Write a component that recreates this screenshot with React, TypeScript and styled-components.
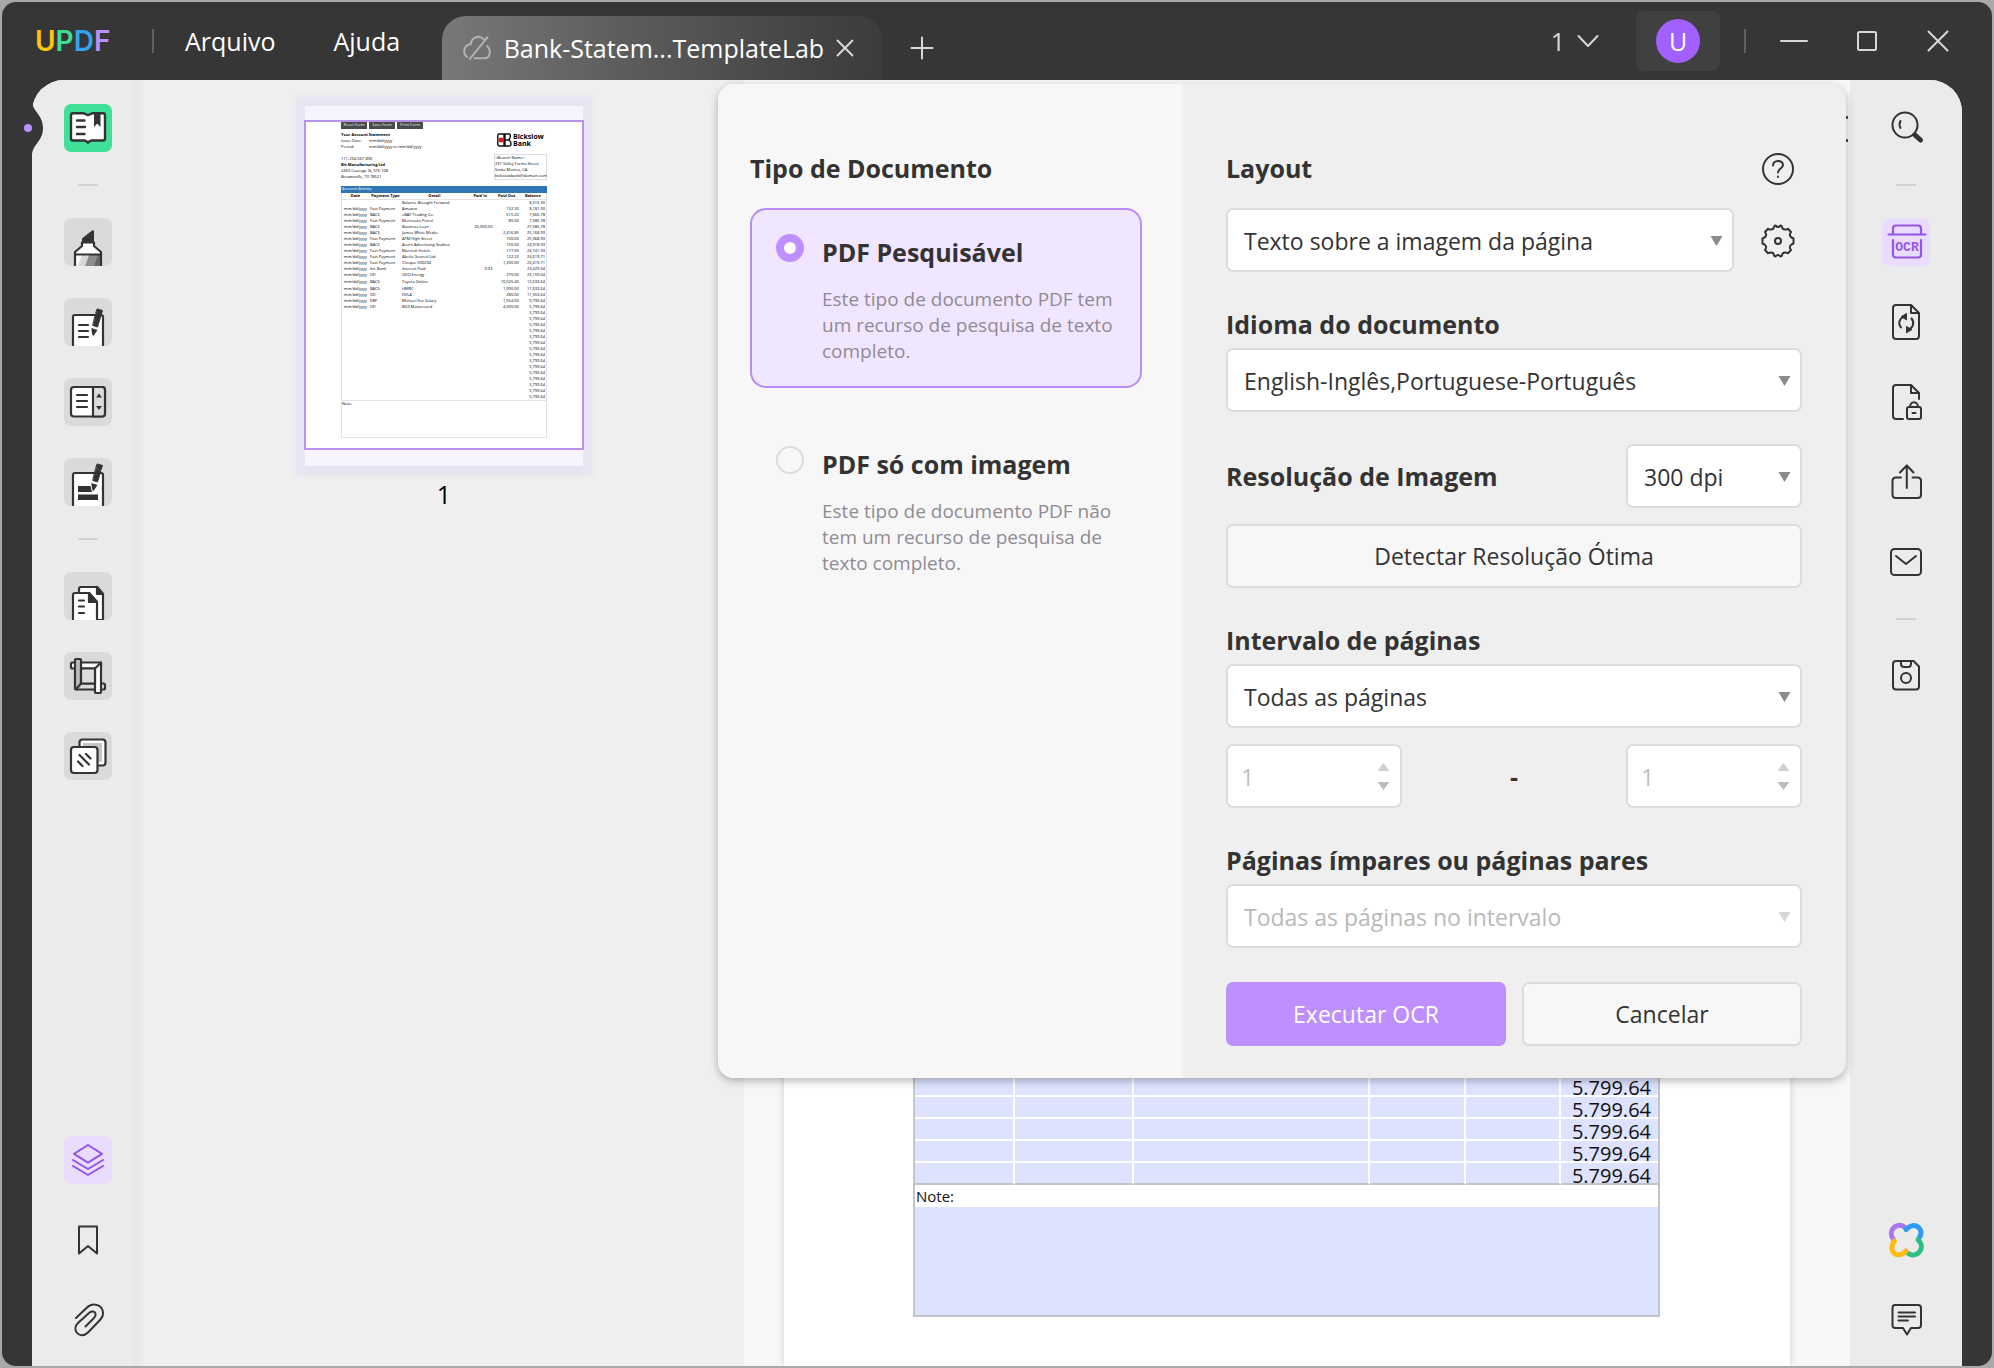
import React from "react";
import styled, { createGlobalStyle, css } from "styled-components";

const ink = "#333333";
const accent = "#bd8fff";

const GlobalStyle = createGlobalStyle`
  *, *::before, *::after { box-sizing: border-box; }
  body {
    margin: 0;
    background: #a9a9ab;
    color: ${ink};
    font-family: "Open Sans", "Noto Sans", sans-serif;
    font-size: 23px;
  }
  button, input, select { font: inherit; color: inherit; }
  button { border: 0; padding: 0; background: none; cursor: pointer; }
  svg { display: block; }
`;

/* ---------- window ---------- */

const Screen = styled.div`
  height: 100vh;
  padding: 2px;
  overflow: hidden;
`;

const Window = styled.div`
  height: 100%;
  display: flex;
  flex-direction: column;
  background: #363636;
  border-radius: 14px;
  overflow: hidden;
`;

const TitleBar = styled.header`
  height: 78px;
  flex: none;
  display: flex;
  align-items: stretch;
  color: #ffffff;
  padding: 0 41px 0 33px;
`;

const Logo = styled.div`
  display: flex;
  align-items: center;
  width: 76px;
  font-family: Inter, sans-serif;
  font-weight: 600;
  font-size: 28px;
  line-height: 32px;
`;

const LogoLetter = styled.span<{ $color: string }>`
  color: ${(p) => p.$color};
`;

const BarDivider = styled.span`
  align-self: center;
  width: 2px;
  height: 24px;
  background: #626262;
`;

const Menu = styled.nav`
  display: flex;
  align-items: center;
  gap: 58px;
  margin: 0 42px 0 31px;
`;

const MenuButton = styled.button`
  font-size: 25px;
  line-height: 36px;
`;

const Tab = styled.div`
  margin-top: 14px;
  width: 440px;
  display: flex;
  align-items: center;
  gap: 12px;
  padding: 0 28px 0 20px;
  border-radius: 24px 24px 0 0;
  background: linear-gradient(90deg, #787878 0%, #5a5a5a 45%, #404040 90%, #3c3c3c 100%);
`;

const TabTitle = styled.span`
  flex: 1;
  font-size: 25px;
  line-height: 36px;
  white-space: nowrap;
`;

const NewTab = styled.button`
  align-self: flex-end;
  height: 64px;
  margin-left: 28px;
`;

const WindowTools = styled.div`
  margin-left: auto;
  display: flex;
  align-items: center;
`;

const TabCount = styled.button`
  display: flex;
  align-items: center;
  gap: 12px;
  color: #d8d8d8;
  margin-right: 37px;
  font-size: 25px;
  line-height: 36px;
`;

const Account = styled.button`
  width: 84px;
  height: 60px;
  display: grid;
  place-items: center;
  background: #404040;
  border-radius: 8px;
  margin-right: 24px;
`;

const Avatar = styled.span`
  width: 44px;
  height: 44px;
  border-radius: 50%;
  background: #a160ff;
  color: #ffffff;
  font-size: 25px;
  line-height: 44px;
  text-align: center;
`;

const Caption = styled.div`
  display: flex;
  align-items: center;
  gap: 47px;
  margin-left: 33px;
`;

/* ---------- workspace ---------- */

const Body = styled.div`
  position: relative;
  flex: 1;
  min-height: 0;
  margin: 0 30px;
  display: flex;
  background: #efefef;
  border-radius: 32px 32px 0 0;
`;

const Notch = styled.button`
  position: absolute;
  left: -10px;
  top: 20px;
`;

const Rail = styled.aside<{ $side: "left" | "right" }>`
  flex: none;
  width: 112px;
  padding: 24px 0 22px;
  display: flex;
  flex-direction: column;
  align-items: center;
  justify-content: space-between;
  background: #ebebeb;
  ${(p) =>
    p.$side === "left"
      ? css`
          border-radius: 32px 0 0 0;
          background: linear-gradient(90deg, #ebebeb 88%, #e8e8e8 92%, #ededed 100%);
        `
      : css`
          border-radius: 0 32px 0 0;
        `}
`;

const RailGroup = styled.div`
  display: flex;
  flex-direction: column;
  align-items: center;
  gap: 32px;
`;

const RailButton = styled.button<{ $bg?: string }>`
  width: 48px;
  height: 48px;
  display: grid;
  place-items: center;
  border-radius: 7px;
  background: ${(p) => p.$bg || "transparent"};
`;

const RailDivider = styled.span`
  width: 20px;
  height: 2px;
  background: #d2d2d2;
`;

const Thumbs = styled.section`
  flex: none;
  width: 600px;
  padding-top: 26px;
  display: flex;
  flex-direction: column;
  align-items: center;
`;

const ThumbFrame = styled.div`
  width: 278px;
  padding: 14px 0 16px;
  background: #f8f4fe;
  box-shadow: 0 0 4px 10px #e8e4f2;
`;

const ThumbPage = styled.article`
  height: 330px;
  margin: 0 -1px;
  padding: 0 35px;
  border: 2px solid #b993ea;
  background: #ffffff;
  font-size: 4px;
  line-height: 6px;
  color: #000000;
`;

const PageNumber = styled.span`
  margin-top: 10px;
  color: #000000;
  font-size: 25px;
  line-height: 36px;
`;

const FormButtons = styled.div`
  display: flex;
  gap: 2px;
  margin-bottom: 3px;
`;

const FormButton = styled.span`
  width: 26px;
  height: 7px;
  background: #4a4a4a;
  color: #eeeeee;
  text-align: center;
`;

const StatementHead = styled.div`
  display: flex;
  justify-content: space-between;
  margin-bottom: 6px;
`;

const HeadColumn = styled.div<{ $right?: boolean }>`
  display: flex;
  flex-direction: column;
  ${(p) => p.$right && "width: 53px; justify-content: space-between;"}
`;

const HeadLine = styled.span<{ $gap?: boolean; $bold?: boolean }>`
  white-space: nowrap;
  ${(p) => p.$bold && "font-weight: 700;"}
  ${(p) => p.$gap && "margin-top: 6px;"}
`;

const Fact = styled.span`
  display: grid;
  grid-template-columns: 28px auto;
  white-space: nowrap;
`;

const BankLogo = styled.div`
  display: flex;
  gap: 1px;
  padding: 1px 0 0 3px;
  font-size: 7px;
  line-height: 7px;
  font-weight: 700;
`;

const Branch = styled.div`
  display: flex;
  flex-direction: column;
  border: 1px solid #dddddd;
  height: 26px;
  white-space: nowrap;
`;

const ActivityBar = styled.div`
  background: #2f74b5;
  color: #ffffff;
  height: 7px;
  padding-left: 1px;
`;

const Ledger = styled.table`
  width: 100%;
  table-layout: fixed;
  border-collapse: collapse;
  border: 1px solid #e2e2e2;
  border-top: 0;

  th, td { padding: 0; height: 6px; line-height: 6px; white-space: nowrap; }
  thead th { border-bottom: 1px solid #e2e2e2; }
  td:nth-child(1) { text-align: center; }
  td:nth-child(2) { padding-left: 1px; }
  td:nth-child(n + 4) { text-align: right; padding-right: 1px; }
`;

const LedgerRow = styled.tr<{ $tall?: boolean }>`
  ${(p) => p.$tall && "td { height: 8px; line-height: 8px; }"}
`;

const ThumbNote = styled.div`
  height: 37px;
  border: 1px solid #e2e2e2;
  border-top: 0;
`;

const Viewer = styled.main`
  flex: 1;
  min-width: 0;
  min-height: 0;
  display: flex;
  flex-direction: column;
  background: #f7f7f7;
  overflow: hidden;
`;

const ViewerTools = styled.div`
  height: 76px;
  flex: none;
  display: flex;
  justify-content: flex-end;
  padding: 36px 2px 0 0;
`;

const Paper = styled.article`
  flex: 1;
  display: flex;
  flex-direction: column;
  justify-content: flex-end;
  margin: 0 60px 0 40px;
  padding: 0 130px 49px 129px;
  background: #ffffff;
  box-shadow: 0 0 8px rgba(0, 0, 0, 0.16);
`;

const FormTable = styled.table`
  width: 100%;
  table-layout: fixed;
  border-collapse: separate;
  border-spacing: 0;
  border: solid #c2c4cc;
  border-width: 0 2px;

  td {
    height: 22px;
    padding: 0;
    background: #dde3ff;
    border-bottom: 2px solid #ffffff;
    border-right: 2px solid #ffffff;
  }
  td:last-child { border-right: 0; }
  tr:last-child td { border-bottom-color: #c2c4cc; }
`;

const Amount = styled.div`
  height: 20px;
  padding-right: 7px;
  text-align: right;
  font-size: 20px;
  line-height: 26px;
  color: #111111;
`;

const NoteBox = styled.div`
  border: 2px solid #c2c4cc;
  border-top: 0;
`;

const NoteLabel = styled.label`
  display: block;
  height: 22px;
  padding-left: 1px;
  font-size: 15px;
  line-height: 22px;
  color: #111111;
`;

const NoteField = styled.textarea`
  display: block;
  width: 100%;
  height: 108px;
  border: 0;
  background: #dde3ff;
  resize: none;
`;

/* ---------- OCR dialog ---------- */

const Dialog = styled.form`
  position: absolute;
  top: 4px;
  right: 116px;
  width: 1128px;
  display: flex;
  border-radius: 16px;
  background: #efefef;
  box-shadow: 0 3px 8px rgba(0, 0, 0, 0.28);
  overflow: hidden;
`;

const TypePane = styled.fieldset`
  width: 464px;
  margin: 0;
  border: 0;
  padding: 68px 40px 32px 32px;
  background: #f7f7f7;
`;

const PaneTitle = styled.legend`
  float: left;
  width: 100%;
  padding: 0;
  margin-bottom: 24px;
  font-weight: 700;
  font-size: 25px;
  line-height: 32px;
`;

const Choice = styled.label<{ $on?: boolean }>`
  clear: both;
  display: grid;
  grid-template-columns: 28px 1fr;
  gap: 0 18px;
  height: 180px;
  margin-bottom: 32px;
  padding: 24px 16px 0 24px;
  border: 2px solid ${(p) => (p.$on ? "#b98cf5" : "transparent")};
  border-radius: 16px;
  background: ${(p) => (p.$on ? "#f1e6ff" : "transparent")};
`;

const Radio = styled.input`
  appearance: none;
  width: 28px;
  height: 28px;
  margin: 0;
  border: 2px solid #dcdcdc;
  border-radius: 50%;

  &:checked {
    border: 8px solid ${accent};
    background: #ffffff;
  }
`;

const ChoiceText = styled.span`
  display: flex;
  flex-direction: column;
  gap: 18px;
  padding-top: 2px;
`;

const ChoiceName = styled.strong`
  font-size: 25px;
  line-height: 32px;
`;

const ChoiceNote = styled.span`
  font-size: 19px;
  line-height: 26px;
  color: #8f8b94;
`;

const OptionsPane = styled.div`
  flex: 1;
  padding: 68px 44px 32px;
`;

const Row = styled.div<{ $gap?: number; $top?: number }>`
  display: flex;
  align-items: center;
  justify-content: space-between;
  gap: ${(p) => p.$gap || 0}px;
  margin-top: ${(p) => p.$top || 0}px;
`;

const FieldLabel = styled.label<{ $block?: boolean }>`
  font-weight: 700;
  font-size: 25px;
  line-height: 32px;
  ${(p) => p.$block && "display: block; margin: 36px 0 8px;"}
`;

const control = css`
  height: 64px;
  border: 2px solid #dcdcdc;
  border-radius: 7px;
  background: #ffffff;
`;

const SelectBox = styled.div<{ $width?: string }>`
  display: grid;
  align-items: center;
  width: ${(p) => p.$width || "100%"};

  > * { grid-area: 1 / 1; }
  > svg { justify-self: end; margin: 2px 11px 0 0; pointer-events: none; }
`;

const Select = styled.select`
  ${control}
  appearance: none;
  width: 100%;
  padding: 2px 32px 0 16px;
  &:disabled { color: #b9b9b9; opacity: 1; }
`;

const NumberBox = styled.div`
  ${control}
  width: 176px;
  display: flex;
  align-items: center;
  padding: 0 10px 0 13px;
`;

const NumberInput = styled.input`
  flex: 1;
  min-width: 0;
  border: 0;
  padding: 2px 0 0;
  background: none;
  color: #bdbdbd;
  appearance: textfield;
  &::-webkit-inner-spin-button { display: none; }
`;

const PushButton = styled.button<{ $primary?: boolean }>`
  ${control}
  flex: 1;
  background: #f7f7f7;
  ${(p) => p.$primary && `background: ${accent}; border-color: ${accent}; color: #ffffff;`}
`;

/* ---------- icons ---------- */

type IconProps = { children: React.ReactNode; size?: number; stroke?: string; width?: number };

const Icon = ({ children, size = 48, stroke = ink, width = 2 }: IconProps) => (
  <svg
    width={size}
    height={size}
    viewBox={`0 0 ${size} ${size}`}
    fill="none"
    stroke={stroke}
    strokeWidth={width}
    strokeLinecap="round"
    strokeLinejoin="round"
    aria-hidden="true"
  >
    {children}
  </svg>
);

const Pen = ({ y }: { y: number }) => (
  <g transform={`translate(0 ${y})`} fill={ink} stroke="none">
    <path d="M33.500 1 L38.500 2.500 L37 7 L32 5 Z" stroke={ink} strokeWidth="1" />
    <path d="M31.800 6 L36.800 8 L33.500 19 L29 17.500 Z" stroke={ink} strokeWidth="1" />
    <path d="M27.500 20 L33.500 22 L29.500 28 C28.500 28 27.500 25 27.500 20 Z" />
  </g>
);

const ReaderIcon = () => (
  <Icon width={2.4}>
    <path
      fill="#fff"
      d="M9 9.200 H19 C21 9.200 22.500 11 24 11 C25.500 11 27 9.200 29 9.200 H39 Q41 9.200 41 11.200 V34.500 Q41 36.500 39 36.500 H27.500 Q26 36.500 24 38.800 Q22 36.500 20.500 36.500 H9 Q7 36.500 7 34.500 V11.200 Q7 9.200 9 9.200 Z"
    />
    <path d="M13 16.500 H20.500 M13 23 H21 M13 30 H20.500" />
    <path fill={ink} stroke="none" d="M30 9 H36.500 V23 L33.200 19.500 L30 23 Z" />
  </Icon>
);

const HighlightIcon = () => (
  <Icon width={2.2}>
    <path fill="#fff" d="M11 48 V34 L18 28 V24.500 H30 V28 L37 34 V48" />
    <path fill="#d8d8d8" stroke="none" d="M18 37 H25 L21 48 H14 Z" />
    <path fill="#8d8d8d" stroke="none" d="M25 37 H36 V48 H21 Z" />
    <path fill="#666" stroke="none" d="M34 37 H36 V48 H30 Z" />
    <path d="M11 36.500 H37" />
    <path fill={ink} stroke="none" d="M18 25 V20.500 L28 12.500 Q30 11.500 30 13.500 V25 Z" />
  </Icon>
);

const EditIcon = () => (
  <Icon width={2.2}>
    <path fill="#fff" d="M9 48 V19 Q9 17 11 17 H37 Q39 17 39 19 V48" />
    <path d="M15 27 H24 M15 33 H24 M15 39 H24" />
    <Pen y={10} />
  </Icon>
);

const FormIcon = () => (
  <Icon width={2.2}>
    <rect x="7" y="9" width="34" height="29.500" rx="3" fill="#fff" />
    <path fill="#dcdcdc" d="M29 9 H38 Q41 9 41 12 V35.500 Q41 38.500 38 38.500 H29 Z" />
    <path d="M13 17 H23 M13 23 H23 M13 29 H23" />
    <path fill={ink} stroke="none" d="M32 19.500 L35 15.500 L38 19.500 Z M32 28 L35 32 L38 28 Z" />
  </Icon>
);

const RedactIcon = () => (
  <Icon width={2.2}>
    <path fill="#fff" d="M9 48 V17 Q9 15 11 15 H37 Q39 15 39 17 V48" />
    <path fill={ink} stroke="none" d="M14 28 H26.500 L28 34 H14 Z M14 36.500 H34 V42 H14 Z" />
    <Pen y={5} />
  </Icon>
);

const OrganizeIcon = () => (
  <Icon width={2.2}>
    <path fill="#fff" d="M15 21 V17 Q15 15 17 15 H33 L39 22 V48 H31" />
    <path fill={ink} d="M33 15 V22 H39 Z" />
    <path fill="#fff" d="M9 48 V23 Q9 21 11 21 H25 L33 30 V48" />
    <path fill={ink} d="M25 21 V30 H33 Z" />
    <path d="M15 28.500 H20 M15 34.500 H20 M15 41 H20" />
  </Icon>
);

const CropIcon = () => (
  <Icon width={2.2}>
    <rect x="7" y="10.500" width="30" height="6" rx="1.500" fill="#fff" />
    <rect x="12" y="31.500" width="29" height="6" rx="1.500" fill="#dcdcdc" />
    <path fill="#bdbdbd" d="M11 8 Q11 7 12 7 H16 Q17 7 17 8 V31.500 L12 37.500 Q11 37.500 11 36.500 Z" />
    <path fill="#fff" d="M31 16.500 L37 10.500 V40 Q37 41 36 41 H32 Q31 41 31 40 Z" />
    <rect x="17" y="16.500" width="14" height="15" fill="#dcdcdc" />
  </Icon>
);

const WatermarkIcon = () => (
  <Icon width={2.2}>
    <rect x="15.500" y="7.500" width="26" height="26" rx="3" fill="#fff" />
    <rect x="19" y="11" width="19" height="19" fill="#c6c6c6" stroke="none" />
    <rect x="7" y="15" width="26.500" height="26" rx="3" fill="#fff" />
    <path d="M14 29.500 L18.500 34 M15.500 23 L25 32.500 M22 22 L26.500 26.500" />
  </Icon>
);

const LayersIcon = () => (
  <Icon stroke="#9355e8">
    <path d="M24 9 L38 17.800 L24 26.600 L10 17.800 Z" />
    <path d="M9 24 L24 33 L39 24 M9 30 L24 39 L39 30" />
  </Icon>
);

const BookmarkIcon = () => (
  <Icon>
    <path d="M15 10.500 H33 V37.500 L24 30 L15 37.500 Z" />
  </Icon>
);

const ClipIcon = () => (
  <Icon>
    <path d="M12 22 L22.500 12 C29 5.500 37 9.500 38.500 14 C40 19 38 22 36 24 L24 36.500 C20 40.500 15 39.500 13 37 C10.500 34 11 30 14 27 L25.500 16.500 C28 14.500 31 15.500 31.500 17.500 C32 19.500 31 21 30 22 L21.500 30.500" />
  </Icon>
);

const SearchIcon = () => (
  <Icon>
    <circle cx="23" cy="21" r="12.500" />
    <path d="M18.500 17 Q16.500 20.500 18.500 24" />
    <path d="M33 31 L38.500 36" strokeWidth="5" />
  </Icon>
);

const OcrIcon = () => (
  <Icon stroke="#9355e8" width={2.2}>
    <path d="M11 16 V10.500 Q11 7.500 14 7.500 H36 Q39 7.500 39 10.500 V16 M6.500 16.500 H43.500 M11 22 V36.500 Q11 39.500 14 39.500 H36 Q39 39.500 39 36.500 V22" />
    <text x="25" y="33" textAnchor="middle" fontFamily="Liberation Mono, monospace" fontWeight="700" fontSize="13" fill="#9355e8" stroke="none">
      OCR
    </text>
  </Icon>
);

const ConvertIcon = () => (
  <Icon>
    <path d="M29 7 H14 Q11 7 11 10 V38 Q11 41 14 41 H34 Q37 41 37 38 V15 L29 7 V15 H37" />
    <path d="M19 29.500 C15.500 25.500 17.500 19 24 18.500 M29.500 20.500 C33 24.500 31 31 25 31.500" />
    <path fill={ink} strokeWidth="1" d="M19.500 18.500 L24.500 15.500 V21.500 Z M29.500 31.500 L24.500 28.500 V34.500 Z" />
  </Icon>
);

const ProtectIcon = () => (
  <Icon>
    <path d="M21 41 H14 Q11 41 11 38 V10 Q11 7 14 7 H29 L37 15 V21 M29 7 V15 H37" />
    <rect x="25" y="29" width="14" height="12" rx="2" />
    <path d="M28 29 C28 22.500 36 22.500 36 29 M30.500 35 H33.500" />
  </Icon>
);

const ShareIcon = () => (
  <Icon>
    <path d="M19 19.500 H14 Q10.500 19.500 10.500 23 V36.500 Q10.500 40 14 40 H35.500 Q39 40 39 36.500 V23 Q39 19.500 35.500 19.500 H30.500" />
    <path d="M24.800 30 V7.500 M18 14.500 L24.800 7.500 L31.500 14.500" />
  </Icon>
);

const MailIcon = () => (
  <Icon>
    <rect x="9" y="11" width="30" height="26" rx="3.500" />
    <path d="M14 18 L24 26 L34 18" />
  </Icon>
);

const SaveIcon = () => (
  <Icon>
    <path d="M14 9 H31.500 L37 14.500 V34.500 Q37 37.500 34 37.500 H14 Q11 37.500 11 34.500 V12 Q11 9 14 9 Z" />
    <path d="M19 9 V12 Q19 15 22 15 H26 Q29 15 29 12 V9" />
    <circle cx="24" cy="26" r="5" />
  </Icon>
);

const AiIcon = () => (
  <Icon width={5}>
    <path stroke="#a877f0" d="M11.500 23.500 C5 15 14 5.500 22.500 11" />
    <path stroke="#2f9bf2" d="M24 13.500 C33 4 43.500 14 37 22" />
    <path stroke="#2fbf83" d="M36 24 C45 32 34 43 26.500 37.500" />
    <path stroke="#fdbb12" d="M24 35 C15 44.500 5 34.500 12.500 25" />
  </Icon>
);

const CommentIcon = () => (
  <Icon>
    <path d="M13 9 H36 Q39 9 39 12 V29 Q39 32 36 32 H29 L25 38.500 L21 32 H13 Q10.500 32 10.500 29 V12 Q10.500 9 13 9 Z" />
    <path d="M16.500 16.500 H33 M16.500 20.500 H33 M16.500 24.500 H26" />
  </Icon>
);

const Arrow = ({ color = "#8a8a8a", up = false, small = false }) => (
  <svg width="13" height={small ? 8 : 10} viewBox="0 0 13 10" preserveAspectRatio="none" aria-hidden="true">
    <path fill={color} d={up ? "M6.500 0 L12.500 10 H.5 Z" : "M.5 0 H12.500 L6.500 10 Z"} />
  </svg>
);

const HelpIcon = () => (
  <Icon size={34}>
    <circle cx="17" cy="17" r="15" />
    <path d="M12 13.500 C12 7.500 22 7.500 22 13 C22 16.500 17 16.500 17 20.500 M17 24.500 V25" />
  </Icon>
);

const GearIcon = () => (
  <Icon size={34}>
    <path d="M12.500 4.500 Q13 1.500 14.500 1.500 Q17 4.500 19.500 1.500 Q21 1.500 21.500 4.500 Q23.500 6.500 27 4.800 L30 8 Q27.500 11.500 30.500 13.500 L32.500 14.500 V19.500 L30.500 20.500 Q27.500 22.500 30 26 L27 29.200 Q23.500 27.500 21.500 29.500 Q21 32.500 19.500 32.500 Q17 29.500 14.500 32.500 Q13 32.500 12.500 29.500 Q10.500 27.500 7 29.200 L4 26 Q6.500 22.500 3.500 20.500 L1.500 19.500 V14.500 L3.500 13.500 Q6.500 11.500 4 8 L7 4.800 Q10.500 6.500 12.500 4.500 Z" />
    <circle cx="17" cy="17" r="3" />
  </Icon>
);

/* ---------- statement data ---------- */

type Entry = [string, string, string, string, string, string];
const d = "mm/dd/yyyy";
const entries: Entry[] = [
  ["", "", "Balance Brought Forward", "", "", "8,313.30"],
  [d, "Fast Payment", "Amazon", "", "132.30", "8,181.00"],
  [d, "BACS", "eBAY Trading Co.", "", "515.22", "7,665.78"],
  [d, "Fast Payment", "Morrisons Petrol", "", "80.00", "7,585.78"],
  [d, "BACS", "Business Loan", "20,000.00", "", "27,585.78"],
  [d, "BACS", "James White Media", "", "2,416.85", "25,168.93"],
  [d, "Fast Payment", "ATM High Street", "", "100.00", "25,068.93"],
  [d, "BACS", "Acorn Advertising Studios", "", "150.00", "24,918.93"],
  [d, "Fast Payment", "Marriott Hotels", "", "177.00", "24,741.93"],
  [d, "Fast Payment", "Abelio Scotrail Ltd", "", "122.22", "24,619.71"],
  [d, "Fast Payment", "Cheque 000234", "", "1,200.00", "23,419.71"],
  [d, "Int. Bank", "Interest Paid", "9.33", "", "23,429.04"],
  [d, "DD", "OVO Energy", "", "270.00", "23,159.04"],
  [d, "BACS", "Toyota Online", "", "10,525.40", "12,633.64"],
  [d, "BACS", "HMRC", "", "1,000.00", "11,633.64"],
  [d, "DD", "DVLA", "", "280.00", "11,353.64"],
  [d, "EBP", "Michael Kor Salary", "", "1,554.00", "9,799.64"],
  [d, "DD", "BOS Mastercard", "", "4,000.00", "5,799.64"],
  ...Array.from({ length: 15 }, (): Entry => ["", "", "", "", "", "5,799.64"]),
];

const columns = [100, 120, 237, 96, 96, 97];
const Cols = () => (
  <colgroup>
    {columns.map((c, i) => (
      <col key={i} style={{ width: `${(c / 746) * 100}%` }} />
    ))}
  </colgroup>
);

const Thumbnail = () => (
  <ThumbPage aria-label="Página 1">
    <FormButtons>
      <FormButton>Reset Form</FormButton>
      <FormButton>Save Form</FormButton>
      <FormButton>Print Form</FormButton>
    </FormButtons>
    <StatementHead>
      <HeadColumn>
        <HeadLine $bold>Your Account Statement</HeadLine>
        <Fact><span>Issue Date:</span><span>mm/dd/yyyy</span></Fact>
        <Fact><span>Period:</span><span>mm/dd/yyyy to mm/dd/yyyy</span></Fact>
        <HeadLine $gap>111-234-567-890</HeadLine>
        <HeadLine $bold>Bit Manufacturing Ltd</HeadLine>
        <HeadLine>2450 Courage St, STE 108</HeadLine>
        <HeadLine>Brownsville, TX 78521</HeadLine>
      </HeadColumn>
      <HeadColumn $right>
        <BankLogo>
          <svg width="15" height="14" viewBox="0 0 15 14" fill="none" stroke="#111" strokeWidth="1.400">
            <path d="M7 1 H2 Q.8 1 .8 2.500 V11 Q.8 13 3 13 H7 Z M8 1 H12 Q14 1.500 13 5 L12 6.500 L13.500 9 Q15 13 12 13 H8 Z M8 7 H12" />
            <circle cx="4" cy="7" r="2.500" fill="#e3171b" stroke="none" />
          </svg>
          <span>Bickslow<br />Bank</span>
        </BankLogo>
        <Branch>
          <span>&lt;Branch Name&gt;</span>
          <span>231 Valley Farms Street</span>
          <span>Santa Monica, CA</span>
          <span>bickslowbank@domain.com</span>
        </Branch>
      </HeadColumn>
    </StatementHead>
    <ActivityBar>Account Activity</ActivityBar>
    <Ledger>
      <Cols />
      <thead>
        <tr>
          <th>Date</th><th>Payment Type</th><th>Detail</th><th>Paid In</th><th>Paid Out</th><th>Balance</th>
        </tr>
      </thead>
      <tbody>
        {entries.map((e, i) => (
          <LedgerRow key={i} $tall={e[2] === "Toyota Online"}>
            {e.map((cell, j) => <td key={j}>{cell}</td>)}
          </LedgerRow>
        ))}
      </tbody>
    </Ledger>
    <ThumbNote>Note:</ThumbNote>
  </ThumbPage>
);

const OcrDialog = () => (
  <Dialog role="dialog" aria-label="OCR" onSubmit={(e) => e.preventDefault()}>
    <TypePane>
      <PaneTitle>Tipo de Documento</PaneTitle>
      <Choice $on>
        <Radio type="radio" name="type" defaultChecked />
        <ChoiceText>
          <ChoiceName>PDF Pesquisável</ChoiceName>
          <ChoiceNote>Este tipo de documento PDF tem um recurso de pesquisa de texto completo.</ChoiceNote>
        </ChoiceText>
      </Choice>
      <Choice>
        <Radio type="radio" name="type" />
        <ChoiceText>
          <ChoiceName>PDF só com imagem</ChoiceName>
          <ChoiceNote>Este tipo de documento PDF não tem um recurso de pesquisa de texto completo.</ChoiceNote>
        </ChoiceText>
      </Choice>
    </TypePane>
    <OptionsPane>
      <Row>
        <FieldLabel htmlFor="layout">Layout</FieldLabel>
        <HelpButton type="button" aria-label="Ajuda do OCR"><HelpIcon /></HelpButton>
      </Row>
      <Row $top={24} $gap={27}>
        <SelectBox>
          <Select id="layout"><option>Texto sobre a imagem da página</option></Select>
          <Arrow />
        </SelectBox>
        <HelpButton type="button" aria-label="Configurações de layout"><GearIcon /></HelpButton>
      </Row>
      <FieldLabel $block htmlFor="lang">Idioma do documento</FieldLabel>
      <SelectBox>
        <Select id="lang"><option>English-Inglês,Portuguese-Português</option></Select>
        <Arrow />
      </SelectBox>
      <Row $top={32}>
        <FieldLabel htmlFor="dpi">Resolução de Imagem</FieldLabel>
        <SelectBox $width="176px">
          <Select id="dpi"><option>300 dpi</option></Select>
          <Arrow />
        </SelectBox>
      </Row>
      <Row $top={16}><PushButton type="button">Detectar Resolução Ótima</PushButton></Row>
      <FieldLabel $block htmlFor="range">Intervalo de páginas</FieldLabel>
      <SelectBox>
        <Select id="range"><option>Todas as páginas</option></Select>
        <Arrow />
      </SelectBox>
      <Row $top={16}>
        <PageSpinner label="Da página" />
        <Dash>-</Dash>
        <PageSpinner label="Até a página" />
      </Row>
      <FieldLabel $block htmlFor="parity">Páginas ímpares ou páginas pares</FieldLabel>
      <SelectBox>
        <Select id="parity" disabled><option>Todas as páginas no intervalo</option></Select>
        <Arrow color="#d6d6d6" />
      </SelectBox>
      <Row $top={34} $gap={16}>
        <PushButton $primary type="submit">Executar OCR</PushButton>
        <PushButton type="button">Cancelar</PushButton>
      </Row>
    </OptionsPane>
  </Dialog>
);

const HelpButton = styled.button`
  width: 34px;
  height: 32px;
  flex: none;
  display: grid;
  place-items: center;
  margin-right: 7px;
`;

const Dash = styled.span`
  font-weight: 700;
  font-size: 25px;
  line-height: 32px;
`;

const SpinArrows = styled.span`
  display: flex;
  flex-direction: column;
  gap: 11px;
`;

const PageSpinner = ({ label }: { label: string }) => (
  <NumberBox>
    <NumberInput type="number" aria-label={label} defaultValue={1} disabled />
    <SpinArrows>
      <Arrow up small color="#d0d0d0" />
      <Arrow small color="#bcbcbc" />
    </SpinArrows>
  </NumberBox>
);

const light = "#d8d8d8";
const tile = "#dadada";
const lilac = "#e9dcff";

export default function App() {
  return (
    <Screen>
      <GlobalStyle />
      <Window>
        <TitleBar>
          <Logo>
            <LogoLetter $color="#ffc60b">U</LogoLetter>
            <LogoLetter $color="#3fdd94">P</LogoLetter>
            <LogoLetter $color="#33a5f0">D</LogoLetter>
            <LogoLetter $color={accent}>F</LogoLetter>
          </Logo>
          <Spacer />
          <BarDivider />
          <Menu>
            <MenuButton>Arquivo</MenuButton>
            <MenuButton>Ajuda</MenuButton>
          </Menu>
          <Tab>
            <Icon size={30} stroke="#b4b4b4">
              <path d="M22 6 C17 1 9 5 9 11 C2 12 0 20 5 24 M26 4 L8 26 M13 25.500 H23 C29 25 30 17 25.500 13" />
            </Icon>
            <TabTitle>Bank-Statem...TemplateLab</TabTitle>
            <button aria-label="Fechar aba">
              <Icon size={18} stroke={light}><path d="M1.500 1.500 L16.500 16.500 M16.500 1.500 L1.500 16.500" /></Icon>
            </button>
          </Tab>
          <NewTab aria-label="Nova aba">
            <Icon size={24} stroke={light}><path d="M12 1.500 V22.500 M1.500 12 H22.500" /></Icon>
          </NewTab>
          <WindowTools>
            <TabCount>
              1
              <Icon size={22} stroke={light}><path d="M1.500 6 L11 16 L20.500 6" /></Icon>
            </TabCount>
            <Account aria-label="Conta"><Avatar>U</Avatar></Account>
            <BarDivider />
            <Caption>
              <button aria-label="Minimizar">
                <Icon size={30} stroke={light}><path d="M2 15 H28" /></Icon>
              </button>
              <button aria-label="Maximizar">
                <Icon size={22} stroke={light}><rect x="2" y="2" width="18" height="18" rx="1.500" /></Icon>
              </button>
              <button aria-label="Fechar">
                <Icon size={26} stroke={light}><path d="M3.500 3.500 L22.500 22.500 M22.500 3.500 L3.500 22.500" /></Icon>
              </button>
            </Caption>
          </WindowTools>
        </TitleBar>

        <Body>
          <Rail $side="left">
            <RailGroup>
              <RailButton $bg="#3fe098" aria-label="Leitor"><ReaderIcon /></RailButton>
              <RailDivider />
              <RailButton $bg={tile} aria-label="Comentar"><HighlightIcon /></RailButton>
              <RailButton $bg={tile} aria-label="Editar"><EditIcon /></RailButton>
              <RailButton $bg={tile} aria-label="Formulário"><FormIcon /></RailButton>
              <RailButton $bg={tile} aria-label="Redigir"><RedactIcon /></RailButton>
              <RailDivider />
              <RailButton $bg={tile} aria-label="Organizar"><OrganizeIcon /></RailButton>
              <RailButton $bg={tile} aria-label="Cortar"><CropIcon /></RailButton>
              <RailButton $bg={tile} aria-label="Marca d'água"><WatermarkIcon /></RailButton>
            </RailGroup>
            <RailGroup>
              <RailButton $bg={lilac} aria-label="Miniaturas"><LayersIcon /></RailButton>
              <RailButton aria-label="Marcadores"><BookmarkIcon /></RailButton>
              <RailButton aria-label="Anexos"><ClipIcon /></RailButton>
            </RailGroup>
          </Rail>

          <Thumbs>
            <ThumbFrame><Thumbnail /></ThumbFrame>
            <PageNumber>1</PageNumber>
          </Thumbs>

          <Viewer>
            <ViewerTools>
              <Icon size={26}><path d="M1 8 V1 H8 M18 1 H25 V2 M1 18 V25 H8 M18 25 H25 V24" /></Icon>
            </ViewerTools>
            <Paper>
              <FormTable>
                <Cols />
                <tbody>
                  {Array.from({ length: 5 }, (_, i) => (
                    <tr key={i}>
                      <td /><td /><td /><td /><td />
                      <td><Amount>5.799.64</Amount></td>
                    </tr>
                  ))}
                </tbody>
              </FormTable>
              <NoteBox>
                <NoteLabel htmlFor="note">Note:</NoteLabel>
                <NoteField id="note" />
              </NoteBox>
            </Paper>
          </Viewer>

          <Rail $side="right">
            <RailGroup>
              <RailButton aria-label="Pesquisar"><SearchIcon /></RailButton>
              <RailDivider />
              <RailButton $bg={lilac} aria-label="OCR"><OcrIcon /></RailButton>
              <RailButton aria-label="Converter"><ConvertIcon /></RailButton>
              <RailButton aria-label="Proteger"><ProtectIcon /></RailButton>
              <RailButton aria-label="Compartilhar"><ShareIcon /></RailButton>
              <RailButton aria-label="E-mail"><MailIcon /></RailButton>
              <RailDivider />
              <RailButton aria-label="Salvar"><SaveIcon /></RailButton>
            </RailGroup>
            <RailGroup>
              <RailButton aria-label="UPDF AI"><AiIcon /></RailButton>
              <RailButton aria-label="Comentários"><CommentIcon /></RailButton>
            </RailGroup>
          </Rail>

          <Notch aria-label="Recolher barra">
            <svg width="22" height="58" viewBox="0 0 22 58">
              <path fill="#363636" d="M0 0 H10 C10 12 21 14 21 28 C21 42 10 44 10 56 V58 H0 Z" />
              <circle cx="6" cy="28" r="4" fill={accent} />
            </svg>
          </Notch>
          <OcrDialog />
        </Body>
      </Window>
    </Screen>
  );
}

const Spacer = styled.span`
  width: 41px;
`;
